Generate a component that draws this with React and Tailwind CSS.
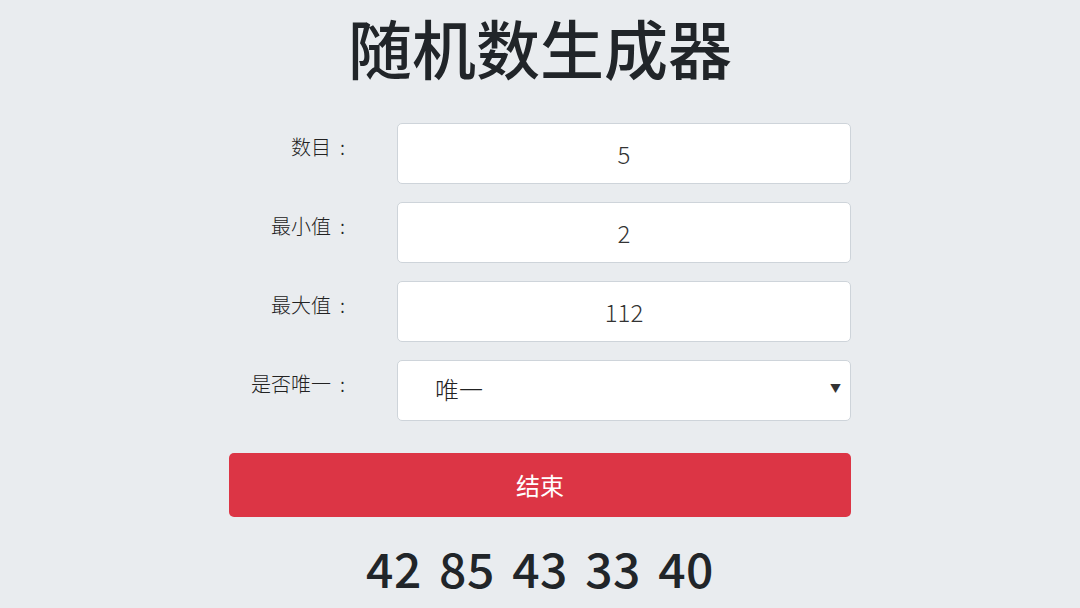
import { useState } from 'react';

const font = { fontFamily: '"Noto Sans CJK SC", "Noto Sans", sans-serif' };

function Label({ text }) {
    return (
        <label className="w-[168px] pr-[52px] pt-[9px] text-right text-[20px] font-light text-[#222] flex justify-end items-center">
            <span>{text}</span>
            <span className="ml-[9px]">:</span>
        </label>
    );
}

export default function App() {
    const [count, setCount] = useState('5');
    const [min, setMin] = useState('2');
    const [max, setMax] = useState('112');
    const [unique, setUnique] = useState('唯一');

    const rows = [
        { label: '数目', value: count, set: setCount },
        { label: '最小值', value: min, set: setMin },
        { label: '最大值', value: max, set: setMax },
    ];

    return (
        <div className="min-h-screen bg-[#e9ecef] flex flex-col items-center" style={font}>
            <h1 className="text-[64px] leading-[76px] font-medium text-[#212529] mt-[8px]">随机数生成器</h1>

            <div className="w-[622px] mt-[39px] flex flex-col gap-[18px]">
                {rows.map((r) => (
                    <div key={r.label} className="flex items-start">
                        <Label text={r.label} />
                        <input
                            type="text"
                            value={r.value}
                            onChange={(e) => r.set(e.target.value)}
                            className="flex-1 h-[61px] bg-white border border-[#ced4da] rounded-[5px] text-center text-[24px] font-light text-[#333] outline-none"
                            style={font}
                        />
                    </div>
                ))}
                <div className="flex items-start">
                    <Label text="是否唯一" />
                    <div className="flex-1 relative">
                        <select
                            value={unique}
                            onChange={(e) => setUnique(e.target.value)}
                            className="w-full h-[61px] appearance-none bg-white border border-[#ced4da] rounded-[5px] pl-[37px] pb-[4px] text-[24px] font-light text-[#222] outline-none"
                            style={font}
                        >
                            <option>唯一</option>
                            <option>不唯一</option>
                        </select>
                        <span className="absolute right-[10px] top-[20px] text-[11px] text-[#333] pointer-events-none">▼</span>
                    </div>
                </div>
            </div>

            <button className="w-[622px] h-[64px] mt-[32px] bg-[#dc3545] rounded-[5px] text-white text-[24px]" style={font}>
                结束
            </button>

            <div className="mt-[20px] text-[48px] leading-[60px] font-medium text-[#212529] tracking-[0.5px] [word-spacing:6px]">42 85 43 33 40</div>
        </div>
    );
}
